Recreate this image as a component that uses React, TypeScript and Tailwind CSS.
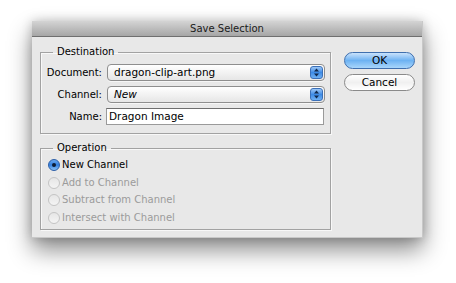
import React from "react";

const font = { fontFamily: '"DejaVu Sans", "Liberation Sans", sans-serif' };

function Stepper() {
  return (
    <div className="w-[13px] h-[13px] rounded-[3px] bg-gradient-to-b from-[#9cc7f5] via-[#3d8be6] to-[#6fb0f2] border border-[#3a6fb8] flex items-center justify-center">
      <svg width="7" height="9" viewBox="0 0 7 9">
        <path d="M3.5 0.5 L6 3.5 L1 3.5 Z" fill="#10284a" />
        <path d="M3.5 8.5 L6 5.5 L1 5.5 Z" fill="#10284a" />
      </svg>
    </div>
  );
}

function Select({ value, italic }: { value: string; italic?: boolean }) {
  return (
    <div className="w-[218px] h-[17px] rounded-[4px] border border-[#8e8e8e] bg-gradient-to-b from-[#ffffff] to-[#e6e6e6] flex items-center pl-[6px] pr-[1px] shadow-[0_1px_0_rgba(255,255,255,0.6)]">
      <span className={"flex-1 text-[10.5px] text-black leading-none " + (italic ? "italic" : "")}>{value}</span>
      <Stepper />
    </div>
  );
}

function Radio({ label, checked, disabled }: { label: string; checked?: boolean; disabled?: boolean }) {
  return (
    <div className="flex items-center h-[17.7px]">
      <div
        className={
          "w-[12px] h-[12px] rounded-full flex items-center justify-center " +
          (checked
            ? "bg-gradient-to-b from-[#6aa8ee] via-[#2f7fe0] to-[#8cc2f5] border border-[#2a5ea8]"
            : "bg-gradient-to-b from-[#e6e6e6] to-[#f4f4f4] border border-[#c4c4c4]")
        }
      >
        {checked && <div className="w-[4px] h-[4px] rounded-full bg-[#0c1c33]" />}
      </div>
      <span className={"ml-[2px] text-[10px] leading-none " + (disabled ? "text-[#9b9b9b]" : "text-black")}>{label}</span>
    </div>
  );
}

export default function App() {
  return (
    <div className="w-[456px] h-[283px] bg-white pl-[32px] pt-[21px]" style={font}>
      <div className="w-[391px] h-[217px] bg-[#e8e8e8] border-r border-b border-[#c8c8c8] shadow-[0_12px_22px_rgba(0,0,0,0.45),0_0_10px_rgba(0,0,0,0.2)] flex flex-col">
        <div className="h-[16px] bg-gradient-to-b from-[#d4d4d4] to-[#a6a6a6] border-b border-[#6f6f6f] flex items-center justify-center">
          <span className="text-[10px] text-[#1a1a1a] leading-none">Save Selection</span>
        </div>
        <div className="flex pt-[8px] pl-[8px]">
          <div className="w-[291px] flex flex-col">
            <fieldset className="border border-[#a2a2a2] shadow-[inset_1px_1px_0_#f8f8f8,1px_1px_0_#f8f8f8] h-[89px] pl-[1px]">
              <legend className="ml-[11px] px-[4px] text-[10px] leading-[14px] text-black">Destination</legend>
              <div className="flex flex-col gap-[5px] mt-[5px]">
                <div className="flex items-center">
                  <span className="w-[61px] text-right text-[10px] text-black pr-[1px]">Document:</span>
                  <div className="ml-[4px]"><Select value="dragon-clip-art.png" /></div>
                </div>
                <div className="flex items-center">
                  <span className="w-[61px] text-right text-[10px] text-black pr-[1px]">Channel:</span>
                  <div className="ml-[4px]"><Select value="New" italic /></div>
                </div>
                <div className="flex items-center">
                  <span className="w-[61px] text-right text-[10px] text-black pr-[1px]">Name:</span>
                  <div className="ml-[3px] w-[218px] h-[17px] bg-white border border-[#9a9a9a] border-t-[#6e6e6e] flex items-center pl-[2px] text-[10.5px] text-black">
                    Dragon Image
                  </div>
                </div>
              </div>
            </fieldset>
            <fieldset className="mt-[7px] border border-[#a2a2a2] shadow-[inset_1px_1px_0_#f8f8f8,1px_1px_0_#f8f8f8] h-[89px] pl-[7px]">
              <legend className="ml-[5px] px-[4px] text-[10px] leading-[14px] text-black">Operation</legend>
              <div className="flex flex-col mt-[1px]">
                <Radio label="New Channel" checked />
                <Radio label="Add to Channel" disabled />
                <Radio label="Subtract from Channel" disabled />
                <Radio label="Intersect with Channel" disabled />
              </div>
            </fieldset>
          </div>
          <div className="ml-[13px] w-[71px] flex flex-col gap-[5px] pt-[7px]">
            <div className="h-[17px] rounded-full border border-[#3f6fae] bg-gradient-to-b from-[#c9e2fb] via-[#6db2f2] to-[#a8d6fb] flex items-center justify-center text-[10.5px] text-black leading-none">
              OK
            </div>
            <div className="h-[17px] rounded-full border border-[#8a8a8a] bg-gradient-to-b from-[#ffffff] via-[#f0f0f0] to-[#ffffff] flex items-center justify-center text-[10.5px] text-black leading-none">
              Cancel
            </div>
          </div>
        </div>
      </div>
    </div>
  );
}
